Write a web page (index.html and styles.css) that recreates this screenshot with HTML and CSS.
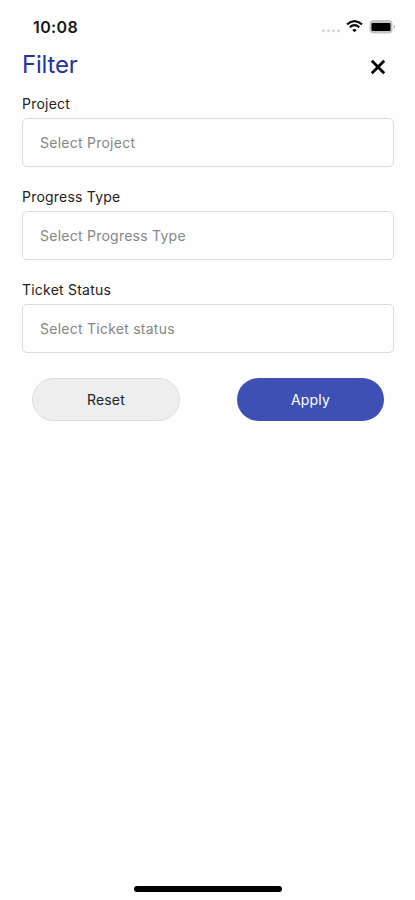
FILE: index.html
```html
<!DOCTYPE html>
<html lang="en">
<head>
<meta charset="utf-8">
<title>Filter</title>
<link rel="stylesheet" href="styles.css">
</head>
<body>
<div class="screen">
  <div class="status-bar">
    <span class="time">10:08</span>
    <svg class="indicators" width="78" height="20" viewBox="0 0 78 20" aria-hidden="true">
      <g fill="#d0d0d0"><circle cx="3.5" cy="13.8" r="1.4"/><circle cx="8.5" cy="13.8" r="1.4"/><circle cx="13.5" cy="13.8" r="1.4"/><circle cx="18.5" cy="13.8" r="1.4"/></g>
      <g fill="none" stroke="#080808" stroke-width="2.1"><path d="M27 7.4Q34.5 .7 42 7.4M29.7 10.3Q34.5 6.1 39.3 10.3"/></g>
      <path d="M32.2 12.9Q34.5 11.3 36.8 12.9L34.5 15.3Z" fill="#080808"/>
      <rect x="49.5" y="3" width="23" height="13.5" rx="4" fill="#c4c4c4"/>
      <rect x="51.5" y="6" width="19" height="8" rx="1" fill="#000"/>
      <path d="M73.8 7.8Q76 9.8 73.8 11.8Z" fill="#929292"/>
    </svg>
  </div>
  <header class="header">
    <h1>Filter</h1>
    <button class="close" type="button" aria-label="Close">
      <svg width="16" height="16" viewBox="0 0 16 16"><path d="M1.8 1.8L14.2 14.2M14.2 1.8L1.8 14.2" stroke="#000" stroke-width="2.8"/></svg>
    </button>
  </header>
  <main class="form">
    <div class="group"><span class="label">Project</span><div class="field">Select Project</div></div>
    <div class="group"><span class="label">Progress Type</span><div class="field">Select Progress Type</div></div>
    <div class="group"><span class="label">Ticket Status</span><div class="field">Select Ticket status</div></div>
    <div class="actions">
      <button class="btn reset" type="button">Reset</button>
      <button class="btn apply" type="button">Apply</button>
    </div>
  </main>
  <div class="home-indicator"></div>
</div>
</body>
</html>
```
FILE: styles.css
```css
* { box-sizing: border-box; }
body { margin: 0; background: #fefefe; font-family: Inter, "Liberation Sans", sans-serif; color: #222; }
button { font: inherit; padding: 0; border: 0; }
.screen { width: 415px; height: 900px; display: flex; flex-direction: column; }
.status-bar { height: 46px; padding: 17px 17px 0 33px; display: flex; justify-content: space-between; }
.time { font-size: 16px; line-height: 20px; font-weight: 600; letter-spacing: .4px; color: #161616; }
.header { height: 48px; padding: 3px 29px 0 22px; display: flex; justify-content: space-between; align-items: flex-start; }
h1 { margin: 0; font-size: 24px; line-height: 32px; font-weight: 400; letter-spacing: -.2px; color: #2433a0; }
.close { width: 16px; height: 16px; margin-top: 10px; background: none; }
.close svg { display: block; }
.form { flex: 1; padding: 0 21px 0 22px; }
.group { height: 93px; }
.label { display: block; height: 24px; font-size: 14px; line-height: 20px; letter-spacing: .22px; }
.field { height: 49px; display: flex; align-items: center; padding: 0 17px; border: 1px solid #dcdcdc; border-radius: 5px; font-size: 14px; letter-spacing: .25px; color: #868686; }
.actions { display: flex; justify-content: space-between; padding: 5px 10px 0; }
.btn { width: 148px; height: 43px; border-radius: 22px; font-size: 14px; letter-spacing: .15px; }
.reset { background: #eee; border: 1px solid #ddd; color: #222; }
.apply { background: #3f50b5; color: #fff; width: 147px; }
.home-indicator { width: 148px; height: 6px; border-radius: 3px; background: #000; margin: 0 0 8px 134px; }
```
